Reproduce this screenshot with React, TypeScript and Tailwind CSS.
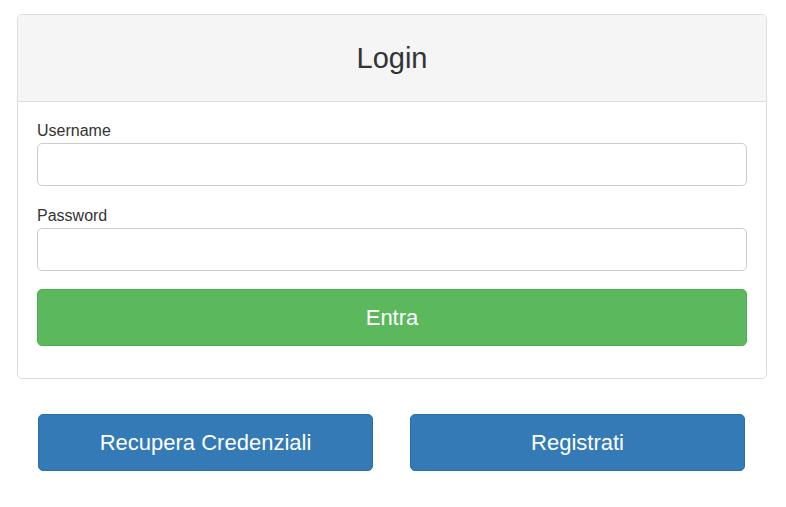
export default function App() {
  return (
    <div className="min-h-[507px] bg-white pt-[14px] font-['Liberation_Sans',Arial,sans-serif] text-[#333]">
      {/* Login panel */}
      <div className="ml-[17px] w-[750px] rounded-[5px] border border-[#dddddd] bg-white">
        <div className="flex h-[87px] items-center justify-center rounded-t-[5px] border-b border-[#dddddd] bg-[#f5f5f5]">
          <h3 className="text-[29px] leading-none">Login</h3>
        </div>
        <form className="px-[19px] pt-[18px] pb-[32px]" onSubmit={(e) => e.preventDefault()}>
          <label className="mb-px block text-[16px] leading-[22px]">Username</label>
          <input
            type="text"
            className="block h-[43px] w-full rounded-[5px] border border-[#cccccc] px-3 text-[16px] focus:outline-none"
          />
          <label className="mt-[19px] mb-px block text-[16px] leading-[22px]">Password</label>
          <input
            type="password"
            className="block h-[43px] w-full rounded-[5px] border border-[#cccccc] px-3 text-[16px] focus:outline-none"
          />
          <button
            type="submit"
            className="mt-[18px] flex h-[57px] w-full items-center justify-center rounded-[5px] border border-[#4cae4c] bg-[#5cb85c] text-[22px] text-white"
          >
            Entra
          </button>
        </form>
      </div>

      {/* Secondary actions */}
      <div className="mt-[35px] ml-[38px] grid w-[707px] grid-cols-2 gap-[37px]">
        <button className="flex h-[57px] items-center justify-center rounded-[5px] border border-[#2e6da4] bg-[#337ab7] text-[22px] text-white">
          Recupera Credenziali
        </button>
        <button className="flex h-[57px] items-center justify-center rounded-[5px] border border-[#2e6da4] bg-[#337ab7] text-[22px] text-white">
          Registrati
        </button>
      </div>
    </div>
  );
}
